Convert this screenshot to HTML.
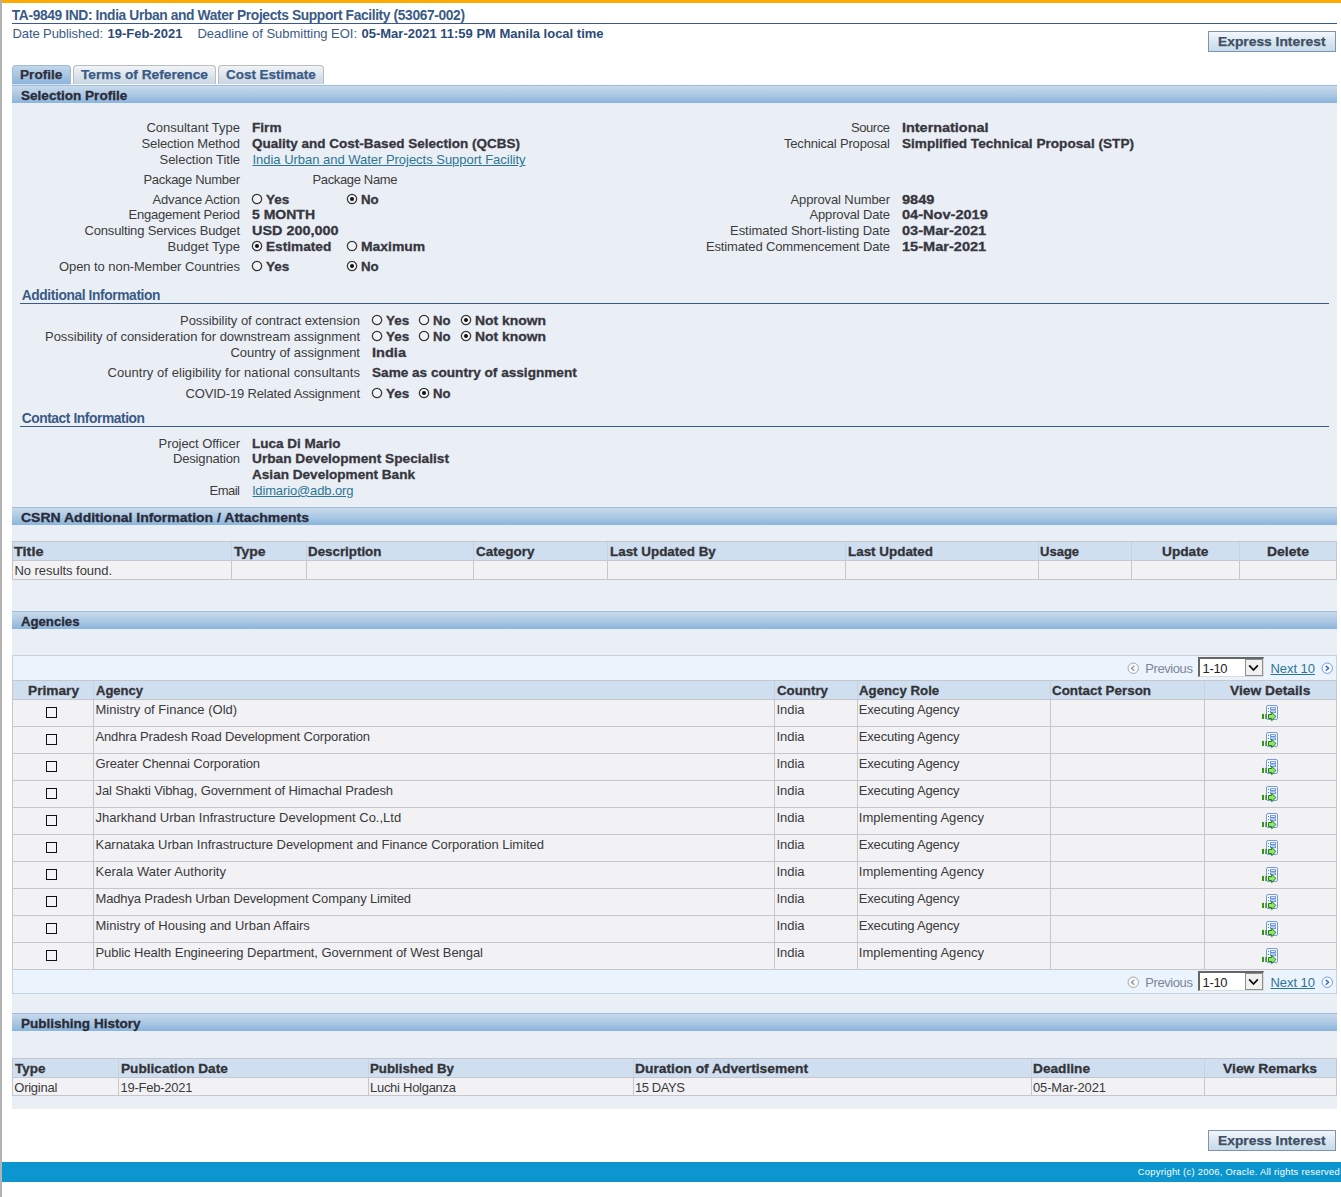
<!DOCTYPE html>
<html><head><meta charset="utf-8"><title>CSRN</title><style>
html,body{margin:0;padding:0;}
body{width:1341px;height:1197px;position:relative;overflow:hidden;background:#fff;font-family:"Liberation Sans",sans-serif;}
div,span.t,svg{position:absolute;}
span.t{white-space:pre;line-height:1em;}
</style></head><body>
<div style="left:0px;top:0px;width:2px;height:1197px;background:#b2b2b2;"></div>
<div style="left:2px;top:0px;width:1339px;height:3px;background:#ffaa00;"></div>
<div style="left:12px;top:23px;width:1325px;height:1px;background:#3a5a87;"></div>
<div style="left:1208px;top:31px;width:126px;height:19px;border:1px solid #8092ad;background:linear-gradient(#f2f7fb,#dde9f2 45%,#c6dbe9);"></div>
<div style="left:1208px;top:1130px;width:126px;height:19px;border:1px solid #8092ad;background:linear-gradient(#f2f7fb,#dde9f2 45%,#c6dbe9);"></div>
<div style="left:12px;top:65px;width:57px;height:18px;border:1px solid #9dbbd9;border-bottom:none;border-radius:4px 4px 0 0;background:linear-gradient(#c3d7eb,#8db4da);"></div>
<div style="left:73px;top:65px;width:141px;height:18px;border:1px solid #b9bcc0;border-bottom:none;border-radius:4px 4px 0 0;background:linear-gradient(#f1f4f7,#c9d6e2);"></div>
<div style="left:218px;top:65px;width:104px;height:18px;border:1px solid #b9bcc0;border-bottom:none;border-radius:4px 4px 0 0;background:linear-gradient(#f1f4f7,#c9d6e2);"></div>
<div style="left:12px;top:84px;width:1325px;height:1px;background:#f6f9fc;"></div>
<div style="left:12px;top:84px;width:59px;height:1px;background:#d3e2f1;"></div>
<div style="left:12px;top:103px;width:1325px;height:1006px;background:#eaeff5;"></div>
<div style="left:12px;top:85px;width:1325px;height:18px;background:linear-gradient(#9fbcda 0,#9fbcda 1px,#c8daec 1px,#abc8e3 55%,#8ab5db);"></div>
<div style="left:12px;top:507px;width:1325px;height:18px;background:linear-gradient(#9fbcda 0,#9fbcda 1px,#c8daec 1px,#abc8e3 55%,#8ab5db);"></div>
<div style="left:12px;top:611px;width:1325px;height:18px;background:linear-gradient(#9fbcda 0,#9fbcda 1px,#c8daec 1px,#abc8e3 55%,#8ab5db);"></div>
<div style="left:12px;top:1013px;width:1325px;height:18px;background:linear-gradient(#9fbcda 0,#9fbcda 1px,#c8daec 1px,#abc8e3 55%,#8ab5db);"></div>
<div style="left:252px;top:194px;width:8px;height:8px;border:1px solid #2a2a2a;border-radius:50%;background:#f2f3f7;box-shadow:0 0 0 0.3px #555;"></div>
<div style="left:347px;top:194px;width:8px;height:8px;border:1px solid #2a2a2a;border-radius:50%;background:#f2f3f7;box-shadow:0 0 0 0.3px #555;"></div>
<div style="left:350px;top:197px;width:4px;height:4px;border-radius:50%;background:#111;"></div>
<div style="left:252px;top:241px;width:8px;height:8px;border:1px solid #2a2a2a;border-radius:50%;background:#f2f3f7;box-shadow:0 0 0 0.3px #555;"></div>
<div style="left:255px;top:244px;width:4px;height:4px;border-radius:50%;background:#111;"></div>
<div style="left:347px;top:241px;width:8px;height:8px;border:1px solid #2a2a2a;border-radius:50%;background:#f2f3f7;box-shadow:0 0 0 0.3px #555;"></div>
<div style="left:252px;top:261px;width:8px;height:8px;border:1px solid #2a2a2a;border-radius:50%;background:#f2f3f7;box-shadow:0 0 0 0.3px #555;"></div>
<div style="left:347px;top:261px;width:8px;height:8px;border:1px solid #2a2a2a;border-radius:50%;background:#f2f3f7;box-shadow:0 0 0 0.3px #555;"></div>
<div style="left:350px;top:264px;width:4px;height:4px;border-radius:50%;background:#111;"></div>
<div style="left:20px;top:303px;width:1309px;height:1px;background:#3a5a87;"></div>
<div style="left:372px;top:315px;width:8px;height:8px;border:1px solid #2a2a2a;border-radius:50%;background:#f2f3f7;box-shadow:0 0 0 0.3px #555;"></div>
<div style="left:419px;top:315px;width:8px;height:8px;border:1px solid #2a2a2a;border-radius:50%;background:#f2f3f7;box-shadow:0 0 0 0.3px #555;"></div>
<div style="left:461px;top:315px;width:8px;height:8px;border:1px solid #2a2a2a;border-radius:50%;background:#f2f3f7;box-shadow:0 0 0 0.3px #555;"></div>
<div style="left:464px;top:318px;width:4px;height:4px;border-radius:50%;background:#111;"></div>
<div style="left:372px;top:331px;width:8px;height:8px;border:1px solid #2a2a2a;border-radius:50%;background:#f2f3f7;box-shadow:0 0 0 0.3px #555;"></div>
<div style="left:419px;top:331px;width:8px;height:8px;border:1px solid #2a2a2a;border-radius:50%;background:#f2f3f7;box-shadow:0 0 0 0.3px #555;"></div>
<div style="left:461px;top:331px;width:8px;height:8px;border:1px solid #2a2a2a;border-radius:50%;background:#f2f3f7;box-shadow:0 0 0 0.3px #555;"></div>
<div style="left:464px;top:334px;width:4px;height:4px;border-radius:50%;background:#111;"></div>
<div style="left:372px;top:388px;width:8px;height:8px;border:1px solid #2a2a2a;border-radius:50%;background:#f2f3f7;box-shadow:0 0 0 0.3px #555;"></div>
<div style="left:419px;top:388px;width:8px;height:8px;border:1px solid #2a2a2a;border-radius:50%;background:#f2f3f7;box-shadow:0 0 0 0.3px #555;"></div>
<div style="left:422px;top:391px;width:4px;height:4px;border-radius:50%;background:#111;"></div>
<div style="left:20px;top:426px;width:1309px;height:1px;background:#3a5a87;"></div>
<div style="left:12px;top:541px;width:1325px;height:1px;background:#c6c7ce;"></div>
<div style="left:12px;top:542px;width:1325px;height:18px;background:#cfdff0;"></div>
<div style="left:12px;top:560px;width:1325px;height:1px;background:#c6c7ce;"></div>
<div style="left:12px;top:561px;width:1325px;height:18px;background:#f2f2f5;"></div>
<div style="left:12px;top:579px;width:1325px;height:1px;background:#c6c7ce;"></div>
<div style="left:12px;top:542px;width:1px;height:18px;background:#c3d3e4;"></div>
<div style="left:12px;top:561px;width:1px;height:19px;background:#c6c7ce;"></div>
<div style="left:231px;top:542px;width:1px;height:18px;background:#c3d3e4;"></div>
<div style="left:231px;top:561px;width:1px;height:19px;background:#c6c7ce;"></div>
<div style="left:306px;top:542px;width:1px;height:18px;background:#c3d3e4;"></div>
<div style="left:306px;top:561px;width:1px;height:19px;background:#c6c7ce;"></div>
<div style="left:473px;top:542px;width:1px;height:18px;background:#c3d3e4;"></div>
<div style="left:473px;top:561px;width:1px;height:19px;background:#c6c7ce;"></div>
<div style="left:607px;top:542px;width:1px;height:18px;background:#c3d3e4;"></div>
<div style="left:607px;top:561px;width:1px;height:19px;background:#c6c7ce;"></div>
<div style="left:845px;top:542px;width:1px;height:18px;background:#c3d3e4;"></div>
<div style="left:845px;top:561px;width:1px;height:19px;background:#c6c7ce;"></div>
<div style="left:1038px;top:542px;width:1px;height:18px;background:#c3d3e4;"></div>
<div style="left:1038px;top:561px;width:1px;height:19px;background:#c6c7ce;"></div>
<div style="left:1131px;top:542px;width:1px;height:18px;background:#c3d3e4;"></div>
<div style="left:1131px;top:561px;width:1px;height:19px;background:#c6c7ce;"></div>
<div style="left:1239px;top:542px;width:1px;height:18px;background:#c3d3e4;"></div>
<div style="left:1239px;top:561px;width:1px;height:19px;background:#c6c7ce;"></div>
<div style="left:1336px;top:542px;width:1px;height:18px;background:#c3d3e4;"></div>
<div style="left:1336px;top:561px;width:1px;height:19px;background:#c6c7ce;"></div>
<div style="left:12px;top:541px;width:1px;height:39px;background:#c6c7ce;"></div>
<div style="left:1336px;top:541px;width:1px;height:39px;background:#c6c7ce;"></div>
<div style="left:12px;top:655px;width:1323px;height:24px;border:1px solid #c8d2dd;background:#ebf3fd;"></div>
<svg style="left:1127px;top:661.6px" width="13" height="13" viewBox="0 0 13 13"><circle cx="6.25" cy="6.25" r="5.2" fill="#f8fafc" stroke="#a6a6a6" stroke-width="1"/><path d="M7.4 3.9 L4.5 6.3 L7.4 8.7" fill="none" stroke="#8c8c8c" stroke-width="1.2"/></svg>
<div style="left:1198px;top:657px;width:62.5px;height:17px;border:1px solid #dcdcdc;border-top:2px solid #666;border-left:2px solid #666;background:#fff;"></div>
<div style="left:1244.5px;top:659px;width:18px;height:17px;border:1px solid #8e8e8e;background:#f1f1f1;box-sizing:border-box;"></div>
<svg style="left:1245px;top:659.5px" width="17" height="16" viewBox="0 0 17 16"><path d="M4.2 5.4 L8.5 10 L12.8 5.4" fill="none" stroke="#111" stroke-width="1.8"/></svg>
<svg style="left:1320.8px;top:661.6px" width="13" height="13" viewBox="0 0 13 13"><circle cx="6.25" cy="6.25" r="5.2" fill="#fbfdff" stroke="#6f9ae6" stroke-width="1"/><path d="M4.7 3.9 L7.6 6.3 L4.7 8.7" fill="none" stroke="#2f6bd0" stroke-width="1.4"/></svg>
<div style="left:12px;top:969px;width:1323px;height:23px;border:1px solid #c8d2dd;background:#ebf3fd;"></div>
<svg style="left:1127px;top:975.6px" width="13" height="13" viewBox="0 0 13 13"><circle cx="6.25" cy="6.25" r="5.2" fill="#f8fafc" stroke="#a6a6a6" stroke-width="1"/><path d="M7.4 3.9 L4.5 6.3 L7.4 8.7" fill="none" stroke="#8c8c8c" stroke-width="1.2"/></svg>
<div style="left:1198px;top:971px;width:62.5px;height:17px;border:1px solid #dcdcdc;border-top:2px solid #666;border-left:2px solid #666;background:#fff;"></div>
<div style="left:1244.5px;top:973px;width:18px;height:17px;border:1px solid #8e8e8e;background:#f1f1f1;box-sizing:border-box;"></div>
<svg style="left:1245px;top:973.5px" width="17" height="16" viewBox="0 0 17 16"><path d="M4.2 5.4 L8.5 10 L12.8 5.4" fill="none" stroke="#111" stroke-width="1.8"/></svg>
<svg style="left:1320.8px;top:975.6px" width="13" height="13" viewBox="0 0 13 13"><circle cx="6.25" cy="6.25" r="5.2" fill="#fbfdff" stroke="#6f9ae6" stroke-width="1"/><path d="M4.7 3.9 L7.6 6.3 L4.7 8.7" fill="none" stroke="#2f6bd0" stroke-width="1.4"/></svg>
<div style="left:12px;top:680px;width:1325px;height:1px;background:#c6c7ce;"></div>
<div style="left:12px;top:681px;width:1325px;height:18px;background:#cfdff0;"></div>
<div style="left:12px;top:699px;width:1325px;height:1px;background:#c6c7ce;"></div>
<div style="left:12px;top:700px;width:1325px;height:26px;background:#f2f2f5;"></div>
<div style="left:12px;top:726px;width:1325px;height:1px;background:#c6c7ce;"></div>
<div style="left:12px;top:727px;width:1325px;height:26px;background:#f2f2f5;"></div>
<div style="left:12px;top:753px;width:1325px;height:1px;background:#c6c7ce;"></div>
<div style="left:12px;top:754px;width:1325px;height:26px;background:#f2f2f5;"></div>
<div style="left:12px;top:780px;width:1325px;height:1px;background:#c6c7ce;"></div>
<div style="left:12px;top:781px;width:1325px;height:26px;background:#f2f2f5;"></div>
<div style="left:12px;top:807px;width:1325px;height:1px;background:#c6c7ce;"></div>
<div style="left:12px;top:808px;width:1325px;height:26px;background:#f2f2f5;"></div>
<div style="left:12px;top:834px;width:1325px;height:1px;background:#c6c7ce;"></div>
<div style="left:12px;top:835px;width:1325px;height:26px;background:#f2f2f5;"></div>
<div style="left:12px;top:861px;width:1325px;height:1px;background:#c6c7ce;"></div>
<div style="left:12px;top:862px;width:1325px;height:26px;background:#f2f2f5;"></div>
<div style="left:12px;top:888px;width:1325px;height:1px;background:#c6c7ce;"></div>
<div style="left:12px;top:889px;width:1325px;height:26px;background:#f2f2f5;"></div>
<div style="left:12px;top:915px;width:1325px;height:1px;background:#c6c7ce;"></div>
<div style="left:12px;top:916px;width:1325px;height:26px;background:#f2f2f5;"></div>
<div style="left:12px;top:942px;width:1325px;height:1px;background:#c6c7ce;"></div>
<div style="left:12px;top:943px;width:1325px;height:26px;background:#f2f2f5;"></div>
<div style="left:12px;top:969px;width:1325px;height:1px;background:#c6c7ce;"></div>
<div style="left:12px;top:681px;width:1px;height:18px;background:#c3d3e4;"></div>
<div style="left:12px;top:700px;width:1px;height:270px;background:#c6c7ce;"></div>
<div style="left:93px;top:681px;width:1px;height:18px;background:#c3d3e4;"></div>
<div style="left:93px;top:700px;width:1px;height:270px;background:#c6c7ce;"></div>
<div style="left:774px;top:681px;width:1px;height:18px;background:#c3d3e4;"></div>
<div style="left:774px;top:700px;width:1px;height:270px;background:#c6c7ce;"></div>
<div style="left:857px;top:681px;width:1px;height:18px;background:#c3d3e4;"></div>
<div style="left:857px;top:700px;width:1px;height:270px;background:#c6c7ce;"></div>
<div style="left:1050px;top:681px;width:1px;height:18px;background:#c3d3e4;"></div>
<div style="left:1050px;top:700px;width:1px;height:270px;background:#c6c7ce;"></div>
<div style="left:1204px;top:681px;width:1px;height:18px;background:#c3d3e4;"></div>
<div style="left:1204px;top:700px;width:1px;height:270px;background:#c6c7ce;"></div>
<div style="left:1336px;top:681px;width:1px;height:18px;background:#c3d3e4;"></div>
<div style="left:1336px;top:700px;width:1px;height:270px;background:#c6c7ce;"></div>
<div style="left:12px;top:680px;width:1px;height:290px;background:#c6c7ce;"></div>
<div style="left:1336px;top:680px;width:1px;height:290px;background:#c6c7ce;"></div>
<div style="left:46px;top:707px;width:9px;height:9px;border:1px solid #111;background:#f4f4f6;"></div>
<svg style="left:1261px;top:704px" width="18" height="18" viewBox="0 0 18 18">
<rect x="5.5" y="1.5" width="11" height="14" rx="1.5" fill="#f4fcff" stroke="#6a8fd8" stroke-width="0.9"/>
<rect x="7" y="4" width="1" height="1" fill="#4d6fbe"/><rect x="7" y="7" width="1" height="1" fill="#4d6fbe"/>
<rect x="9.5" y="3.7" width="5" height="1.8" fill="#fff" stroke="#5d88da" stroke-width="0.9"/>
<rect x="9.5" y="6.9" width="5" height="1.8" fill="#fff" stroke="#5d88da" stroke-width="0.9"/>
<rect x="1" y="9.9" width="2" height="5.1" fill="#36961a"/><rect x="4.3" y="9.9" width="1.5" height="5.1" fill="#3a8a22"/>
<path d="M7.5 10.5 H10.7 V8.3 L14.9 12.5 L10.7 16.7 V14.5 H7.5 Z" fill="#8fe570" stroke="#237d0c" stroke-width="1"/>
</svg>
<div style="left:46px;top:734px;width:9px;height:9px;border:1px solid #111;background:#f4f4f6;"></div>
<svg style="left:1261px;top:731px" width="18" height="18" viewBox="0 0 18 18">
<rect x="5.5" y="1.5" width="11" height="14" rx="1.5" fill="#f4fcff" stroke="#6a8fd8" stroke-width="0.9"/>
<rect x="7" y="4" width="1" height="1" fill="#4d6fbe"/><rect x="7" y="7" width="1" height="1" fill="#4d6fbe"/>
<rect x="9.5" y="3.7" width="5" height="1.8" fill="#fff" stroke="#5d88da" stroke-width="0.9"/>
<rect x="9.5" y="6.9" width="5" height="1.8" fill="#fff" stroke="#5d88da" stroke-width="0.9"/>
<rect x="1" y="9.9" width="2" height="5.1" fill="#36961a"/><rect x="4.3" y="9.9" width="1.5" height="5.1" fill="#3a8a22"/>
<path d="M7.5 10.5 H10.7 V8.3 L14.9 12.5 L10.7 16.7 V14.5 H7.5 Z" fill="#8fe570" stroke="#237d0c" stroke-width="1"/>
</svg>
<div style="left:46px;top:761px;width:9px;height:9px;border:1px solid #111;background:#f4f4f6;"></div>
<svg style="left:1261px;top:758px" width="18" height="18" viewBox="0 0 18 18">
<rect x="5.5" y="1.5" width="11" height="14" rx="1.5" fill="#f4fcff" stroke="#6a8fd8" stroke-width="0.9"/>
<rect x="7" y="4" width="1" height="1" fill="#4d6fbe"/><rect x="7" y="7" width="1" height="1" fill="#4d6fbe"/>
<rect x="9.5" y="3.7" width="5" height="1.8" fill="#fff" stroke="#5d88da" stroke-width="0.9"/>
<rect x="9.5" y="6.9" width="5" height="1.8" fill="#fff" stroke="#5d88da" stroke-width="0.9"/>
<rect x="1" y="9.9" width="2" height="5.1" fill="#36961a"/><rect x="4.3" y="9.9" width="1.5" height="5.1" fill="#3a8a22"/>
<path d="M7.5 10.5 H10.7 V8.3 L14.9 12.5 L10.7 16.7 V14.5 H7.5 Z" fill="#8fe570" stroke="#237d0c" stroke-width="1"/>
</svg>
<div style="left:46px;top:788px;width:9px;height:9px;border:1px solid #111;background:#f4f4f6;"></div>
<svg style="left:1261px;top:785px" width="18" height="18" viewBox="0 0 18 18">
<rect x="5.5" y="1.5" width="11" height="14" rx="1.5" fill="#f4fcff" stroke="#6a8fd8" stroke-width="0.9"/>
<rect x="7" y="4" width="1" height="1" fill="#4d6fbe"/><rect x="7" y="7" width="1" height="1" fill="#4d6fbe"/>
<rect x="9.5" y="3.7" width="5" height="1.8" fill="#fff" stroke="#5d88da" stroke-width="0.9"/>
<rect x="9.5" y="6.9" width="5" height="1.8" fill="#fff" stroke="#5d88da" stroke-width="0.9"/>
<rect x="1" y="9.9" width="2" height="5.1" fill="#36961a"/><rect x="4.3" y="9.9" width="1.5" height="5.1" fill="#3a8a22"/>
<path d="M7.5 10.5 H10.7 V8.3 L14.9 12.5 L10.7 16.7 V14.5 H7.5 Z" fill="#8fe570" stroke="#237d0c" stroke-width="1"/>
</svg>
<div style="left:46px;top:815px;width:9px;height:9px;border:1px solid #111;background:#f4f4f6;"></div>
<svg style="left:1261px;top:812px" width="18" height="18" viewBox="0 0 18 18">
<rect x="5.5" y="1.5" width="11" height="14" rx="1.5" fill="#f4fcff" stroke="#6a8fd8" stroke-width="0.9"/>
<rect x="7" y="4" width="1" height="1" fill="#4d6fbe"/><rect x="7" y="7" width="1" height="1" fill="#4d6fbe"/>
<rect x="9.5" y="3.7" width="5" height="1.8" fill="#fff" stroke="#5d88da" stroke-width="0.9"/>
<rect x="9.5" y="6.9" width="5" height="1.8" fill="#fff" stroke="#5d88da" stroke-width="0.9"/>
<rect x="1" y="9.9" width="2" height="5.1" fill="#36961a"/><rect x="4.3" y="9.9" width="1.5" height="5.1" fill="#3a8a22"/>
<path d="M7.5 10.5 H10.7 V8.3 L14.9 12.5 L10.7 16.7 V14.5 H7.5 Z" fill="#8fe570" stroke="#237d0c" stroke-width="1"/>
</svg>
<div style="left:46px;top:842px;width:9px;height:9px;border:1px solid #111;background:#f4f4f6;"></div>
<svg style="left:1261px;top:839px" width="18" height="18" viewBox="0 0 18 18">
<rect x="5.5" y="1.5" width="11" height="14" rx="1.5" fill="#f4fcff" stroke="#6a8fd8" stroke-width="0.9"/>
<rect x="7" y="4" width="1" height="1" fill="#4d6fbe"/><rect x="7" y="7" width="1" height="1" fill="#4d6fbe"/>
<rect x="9.5" y="3.7" width="5" height="1.8" fill="#fff" stroke="#5d88da" stroke-width="0.9"/>
<rect x="9.5" y="6.9" width="5" height="1.8" fill="#fff" stroke="#5d88da" stroke-width="0.9"/>
<rect x="1" y="9.9" width="2" height="5.1" fill="#36961a"/><rect x="4.3" y="9.9" width="1.5" height="5.1" fill="#3a8a22"/>
<path d="M7.5 10.5 H10.7 V8.3 L14.9 12.5 L10.7 16.7 V14.5 H7.5 Z" fill="#8fe570" stroke="#237d0c" stroke-width="1"/>
</svg>
<div style="left:46px;top:869px;width:9px;height:9px;border:1px solid #111;background:#f4f4f6;"></div>
<svg style="left:1261px;top:866px" width="18" height="18" viewBox="0 0 18 18">
<rect x="5.5" y="1.5" width="11" height="14" rx="1.5" fill="#f4fcff" stroke="#6a8fd8" stroke-width="0.9"/>
<rect x="7" y="4" width="1" height="1" fill="#4d6fbe"/><rect x="7" y="7" width="1" height="1" fill="#4d6fbe"/>
<rect x="9.5" y="3.7" width="5" height="1.8" fill="#fff" stroke="#5d88da" stroke-width="0.9"/>
<rect x="9.5" y="6.9" width="5" height="1.8" fill="#fff" stroke="#5d88da" stroke-width="0.9"/>
<rect x="1" y="9.9" width="2" height="5.1" fill="#36961a"/><rect x="4.3" y="9.9" width="1.5" height="5.1" fill="#3a8a22"/>
<path d="M7.5 10.5 H10.7 V8.3 L14.9 12.5 L10.7 16.7 V14.5 H7.5 Z" fill="#8fe570" stroke="#237d0c" stroke-width="1"/>
</svg>
<div style="left:46px;top:896px;width:9px;height:9px;border:1px solid #111;background:#f4f4f6;"></div>
<svg style="left:1261px;top:893px" width="18" height="18" viewBox="0 0 18 18">
<rect x="5.5" y="1.5" width="11" height="14" rx="1.5" fill="#f4fcff" stroke="#6a8fd8" stroke-width="0.9"/>
<rect x="7" y="4" width="1" height="1" fill="#4d6fbe"/><rect x="7" y="7" width="1" height="1" fill="#4d6fbe"/>
<rect x="9.5" y="3.7" width="5" height="1.8" fill="#fff" stroke="#5d88da" stroke-width="0.9"/>
<rect x="9.5" y="6.9" width="5" height="1.8" fill="#fff" stroke="#5d88da" stroke-width="0.9"/>
<rect x="1" y="9.9" width="2" height="5.1" fill="#36961a"/><rect x="4.3" y="9.9" width="1.5" height="5.1" fill="#3a8a22"/>
<path d="M7.5 10.5 H10.7 V8.3 L14.9 12.5 L10.7 16.7 V14.5 H7.5 Z" fill="#8fe570" stroke="#237d0c" stroke-width="1"/>
</svg>
<div style="left:46px;top:923px;width:9px;height:9px;border:1px solid #111;background:#f4f4f6;"></div>
<svg style="left:1261px;top:920px" width="18" height="18" viewBox="0 0 18 18">
<rect x="5.5" y="1.5" width="11" height="14" rx="1.5" fill="#f4fcff" stroke="#6a8fd8" stroke-width="0.9"/>
<rect x="7" y="4" width="1" height="1" fill="#4d6fbe"/><rect x="7" y="7" width="1" height="1" fill="#4d6fbe"/>
<rect x="9.5" y="3.7" width="5" height="1.8" fill="#fff" stroke="#5d88da" stroke-width="0.9"/>
<rect x="9.5" y="6.9" width="5" height="1.8" fill="#fff" stroke="#5d88da" stroke-width="0.9"/>
<rect x="1" y="9.9" width="2" height="5.1" fill="#36961a"/><rect x="4.3" y="9.9" width="1.5" height="5.1" fill="#3a8a22"/>
<path d="M7.5 10.5 H10.7 V8.3 L14.9 12.5 L10.7 16.7 V14.5 H7.5 Z" fill="#8fe570" stroke="#237d0c" stroke-width="1"/>
</svg>
<div style="left:46px;top:950px;width:9px;height:9px;border:1px solid #111;background:#f4f4f6;"></div>
<svg style="left:1261px;top:947px" width="18" height="18" viewBox="0 0 18 18">
<rect x="5.5" y="1.5" width="11" height="14" rx="1.5" fill="#f4fcff" stroke="#6a8fd8" stroke-width="0.9"/>
<rect x="7" y="4" width="1" height="1" fill="#4d6fbe"/><rect x="7" y="7" width="1" height="1" fill="#4d6fbe"/>
<rect x="9.5" y="3.7" width="5" height="1.8" fill="#fff" stroke="#5d88da" stroke-width="0.9"/>
<rect x="9.5" y="6.9" width="5" height="1.8" fill="#fff" stroke="#5d88da" stroke-width="0.9"/>
<rect x="1" y="9.9" width="2" height="5.1" fill="#36961a"/><rect x="4.3" y="9.9" width="1.5" height="5.1" fill="#3a8a22"/>
<path d="M7.5 10.5 H10.7 V8.3 L14.9 12.5 L10.7 16.7 V14.5 H7.5 Z" fill="#8fe570" stroke="#237d0c" stroke-width="1"/>
</svg>
<div style="left:12px;top:1058px;width:1325px;height:1px;background:#c6c7ce;"></div>
<div style="left:12px;top:1059px;width:1325px;height:18px;background:#cfdff0;"></div>
<div style="left:12px;top:1077px;width:1325px;height:1px;background:#c6c7ce;"></div>
<div style="left:12px;top:1078px;width:1325px;height:17px;background:#f2f2f5;"></div>
<div style="left:12px;top:1095px;width:1325px;height:1px;background:#c6c7ce;"></div>
<div style="left:12px;top:1059px;width:1px;height:18px;background:#c3d3e4;"></div>
<div style="left:12px;top:1078px;width:1px;height:18px;background:#c6c7ce;"></div>
<div style="left:118px;top:1059px;width:1px;height:18px;background:#c3d3e4;"></div>
<div style="left:118px;top:1078px;width:1px;height:18px;background:#c6c7ce;"></div>
<div style="left:368px;top:1059px;width:1px;height:18px;background:#c3d3e4;"></div>
<div style="left:368px;top:1078px;width:1px;height:18px;background:#c6c7ce;"></div>
<div style="left:633px;top:1059px;width:1px;height:18px;background:#c3d3e4;"></div>
<div style="left:633px;top:1078px;width:1px;height:18px;background:#c6c7ce;"></div>
<div style="left:1031px;top:1059px;width:1px;height:18px;background:#c3d3e4;"></div>
<div style="left:1031px;top:1078px;width:1px;height:18px;background:#c6c7ce;"></div>
<div style="left:1204px;top:1059px;width:1px;height:18px;background:#c3d3e4;"></div>
<div style="left:1204px;top:1078px;width:1px;height:18px;background:#c6c7ce;"></div>
<div style="left:1336px;top:1059px;width:1px;height:18px;background:#c3d3e4;"></div>
<div style="left:1336px;top:1078px;width:1px;height:18px;background:#c6c7ce;"></div>
<div style="left:12px;top:1058px;width:1px;height:38px;background:#c6c7ce;"></div>
<div style="left:1336px;top:1058px;width:1px;height:38px;background:#c6c7ce;"></div>
<div style="left:2px;top:1162px;width:1339px;height:20px;background:#0b96d0;"></div>
<span class="t" style="left:11.80px;top:9.00px;font-size:13.8px;color:#3a5a87;font-weight:700;letter-spacing:-0.377px;">TA-9849 IND: India Urban and Water Projects Support Facility (53067-002)</span>
<span class="t" style="left:12.50px;top:27.00px;font-size:13px;color:#3a5a87;letter-spacing:-0.092px;">Date Published:</span>
<span class="t" style="left:107.50px;top:27.00px;font-size:13px;color:#2d4a78;font-weight:700;letter-spacing:-0.016px;">19-Feb-2021</span>
<span class="t" style="left:197.50px;top:27.00px;font-size:13px;color:#3a5a87;letter-spacing:-0.035px;">Deadline of Submitting EOI:</span>
<span class="t" style="left:361.50px;top:27.00px;font-size:13px;color:#2d4a78;font-weight:700;">05-Mar-2021 11:59 PM Manila local time</span>
<span class="t" style="left:1218.25px;top:35.00px;font-size:13px;color:#3f4f66;font-weight:700;transform:scaleX(1.0625);transform-origin:0 0;-webkit-text-stroke:0.25px;">Express Interest</span>
<span class="t" style="left:1218.25px;top:1134.00px;font-size:13px;color:#3f4f66;font-weight:700;transform:scaleX(1.0625);transform-origin:0 0;-webkit-text-stroke:0.25px;">Express Interest</span>
<span class="t" style="left:20.20px;top:68.00px;font-size:13px;color:#2e2e3c;font-weight:700;transform:scaleX(1.0477);transform-origin:0 0;-webkit-text-stroke:0.25px;">Profile</span>
<span class="t" style="left:81.00px;top:68.00px;font-size:13px;color:#3a5a87;font-weight:700;transform:scaleX(1.0546);transform-origin:0 0;-webkit-text-stroke:0.25px;">Terms of Reference</span>
<span class="t" style="left:225.80px;top:68.00px;font-size:13px;color:#3a5a87;font-weight:700;transform:scaleX(1.0346);transform-origin:0 0;-webkit-text-stroke:0.25px;">Cost Estimate</span>
<span class="t" style="left:21.00px;top:89.00px;font-size:13px;color:#2a2a38;font-weight:700;transform:scaleX(1.0434);transform-origin:0 0;-webkit-text-stroke:0.3px;">Selection Profile</span>
<span class="t" style="left:21.00px;top:511.00px;font-size:13px;color:#2a2a38;font-weight:700;transform:scaleX(1.0758);transform-origin:0 0;-webkit-text-stroke:0.3px;">CSRN Additional Information / Attachments</span>
<span class="t" style="left:21.00px;top:615.00px;font-size:13px;color:#2a2a38;font-weight:700;transform:scaleX(1.0119);transform-origin:0 0;-webkit-text-stroke:0.3px;">Agencies</span>
<span class="t" style="left:21.00px;top:1017.00px;font-size:13px;color:#2a2a38;font-weight:700;transform:scaleX(1.0405);transform-origin:0 0;-webkit-text-stroke:0.3px;">Publishing History</span>
<span class="t" style="left:146.50px;top:121.00px;font-size:13px;color:#3c3c3c;letter-spacing:-0.016px;">Consultant Type</span>
<span class="t" style="left:252.00px;top:121.00px;font-size:13px;color:#36363e;font-weight:700;transform:scaleX(1.0471);transform-origin:0 0;-webkit-text-stroke:0.3px;">Firm</span>
<span class="t" style="left:141.50px;top:137.00px;font-size:13px;color:#3c3c3c;letter-spacing:-0.130px;">Selection Method</span>
<span class="t" style="left:252.00px;top:137.00px;font-size:13px;color:#36363e;font-weight:700;transform:scaleX(1.0393);transform-origin:0 0;-webkit-text-stroke:0.3px;">Quality and Cost-Based Selection (QCBS)</span>
<span class="t" style="left:159.50px;top:153.00px;font-size:13px;color:#3c3c3c;letter-spacing:-0.031px;">Selection Title</span>
<span class="t" style="left:252.50px;top:153.00px;font-size:13px;color:#2c7596;letter-spacing:-0.024px;text-decoration:underline;">India Urban and Water Projects Support Facility</span>
<span class="t" style="left:143.50px;top:173.00px;font-size:13px;color:#3c3c3c;letter-spacing:-0.304px;">Package Number</span>
<span class="t" style="left:312.50px;top:173.00px;font-size:13px;color:#3c3c3c;letter-spacing:-0.354px;">Package Name</span>
<span class="t" style="left:152.50px;top:193.00px;font-size:13px;color:#3c3c3c;letter-spacing:-0.163px;">Advance Action</span>
<span class="t" style="left:265.70px;top:193.00px;font-size:13px;color:#36363e;font-weight:700;transform:scaleX(1.0392);transform-origin:0 0;-webkit-text-stroke:0.3px;">Yes</span>
<span class="t" style="left:360.80px;top:193.00px;font-size:13px;color:#36363e;font-weight:700;transform:scaleX(1.0205);transform-origin:0 0;-webkit-text-stroke:0.3px;">No</span>
<span class="t" style="left:128.50px;top:208.00px;font-size:13px;color:#3c3c3c;letter-spacing:-0.214px;">Engagement Period</span>
<span class="t" style="left:252.00px;top:208.00px;font-size:13px;color:#36363e;font-weight:700;transform:scaleX(1.0769);transform-origin:0 0;-webkit-text-stroke:0.3px;">5 MONTH</span>
<span class="t" style="left:84.50px;top:224.00px;font-size:13px;color:#3c3c3c;letter-spacing:-0.168px;">Consulting Services Budget</span>
<span class="t" style="left:252.00px;top:224.00px;font-size:13px;color:#36363e;font-weight:700;transform:scaleX(1.1081);transform-origin:0 0;-webkit-text-stroke:0.3px;">USD 200,000</span>
<span class="t" style="left:167.50px;top:240.00px;font-size:13px;color:#3c3c3c;letter-spacing:-0.027px;">Budget Type</span>
<span class="t" style="left:265.70px;top:240.00px;font-size:13px;color:#36363e;font-weight:700;transform:scaleX(1.0508);transform-origin:0 0;-webkit-text-stroke:0.3px;">Estimated</span>
<span class="t" style="left:360.80px;top:240.00px;font-size:13px;color:#36363e;font-weight:700;transform:scaleX(1.0706);transform-origin:0 0;-webkit-text-stroke:0.3px;">Maximum</span>
<span class="t" style="left:59.00px;top:260.00px;font-size:13px;color:#3c3c3c;letter-spacing:-0.067px;">Open to non-Member Countries</span>
<span class="t" style="left:265.70px;top:260.00px;font-size:13px;color:#36363e;font-weight:700;transform:scaleX(1.0392);transform-origin:0 0;-webkit-text-stroke:0.3px;">Yes</span>
<span class="t" style="left:360.80px;top:260.00px;font-size:13px;color:#36363e;font-weight:700;transform:scaleX(1.0205);transform-origin:0 0;-webkit-text-stroke:0.3px;">No</span>
<span class="t" style="left:851.00px;top:121.00px;font-size:13px;color:#3c3c3c;letter-spacing:-0.441px;">Source</span>
<span class="t" style="left:902.00px;top:121.00px;font-size:13px;color:#36363e;font-weight:700;transform:scaleX(1.1088);transform-origin:0 0;-webkit-text-stroke:0.3px;">International</span>
<span class="t" style="left:784.00px;top:137.00px;font-size:13px;color:#3c3c3c;letter-spacing:-0.184px;">Technical Proposal</span>
<span class="t" style="left:902.00px;top:137.00px;font-size:13px;color:#36363e;font-weight:700;transform:scaleX(1.0473);transform-origin:0 0;-webkit-text-stroke:0.3px;">Simplified Technical Proposal (STP)</span>
<span class="t" style="left:790.50px;top:193.00px;font-size:13px;color:#3c3c3c;letter-spacing:-0.118px;">Approval Number</span>
<span class="t" style="left:902.00px;top:193.00px;font-size:13px;color:#36363e;font-weight:700;transform:scaleX(1.1200);transform-origin:0 0;-webkit-text-stroke:0.3px;">9849</span>
<span class="t" style="left:809.50px;top:208.00px;font-size:13px;color:#3c3c3c;letter-spacing:-0.158px;">Approval Date</span>
<span class="t" style="left:902.00px;top:208.00px;font-size:13px;color:#36363e;font-weight:700;transform:scaleX(1.1200);transform-origin:0 0;-webkit-text-stroke:0.3px;">04-Nov-2019</span>
<span class="t" style="left:730.00px;top:224.00px;font-size:13px;color:#3c3c3c;letter-spacing:-0.042px;">Estimated Short-listing Date</span>
<span class="t" style="left:902.00px;top:224.00px;font-size:13px;color:#36363e;font-weight:700;transform:scaleX(1.1200);transform-origin:0 0;-webkit-text-stroke:0.3px;">03-Mar-2021</span>
<span class="t" style="left:706.00px;top:240.00px;font-size:13px;color:#3c3c3c;letter-spacing:-0.148px;">Estimated Commencement Date</span>
<span class="t" style="left:902.00px;top:240.00px;font-size:13px;color:#36363e;font-weight:700;transform:scaleX(1.1200);transform-origin:0 0;-webkit-text-stroke:0.3px;">15-Mar-2021</span>
<span class="t" style="left:21.70px;top:289.00px;font-size:13.8px;color:#3a5a87;font-weight:700;letter-spacing:-0.398px;">Additional Information</span>
<span class="t" style="left:180.00px;top:314.00px;font-size:13px;color:#3c3c3c;letter-spacing:-0.043px;">Possibility of contract extension</span>
<span class="t" style="left:385.70px;top:314.00px;font-size:13px;color:#36363e;font-weight:700;transform:scaleX(1.0392);transform-origin:0 0;-webkit-text-stroke:0.3px;">Yes</span>
<span class="t" style="left:433.00px;top:314.00px;font-size:13px;color:#36363e;font-weight:700;transform:scaleX(1.0090);transform-origin:0 0;-webkit-text-stroke:0.3px;">No</span>
<span class="t" style="left:475.00px;top:314.00px;font-size:13px;color:#36363e;font-weight:700;transform:scaleX(1.0687);transform-origin:0 0;-webkit-text-stroke:0.3px;">Not known</span>
<span class="t" style="left:45.00px;top:330.00px;font-size:13px;color:#3c3c3c;letter-spacing:-0.028px;">Possibility of consideration for downstream assignment</span>
<span class="t" style="left:385.70px;top:330.00px;font-size:13px;color:#36363e;font-weight:700;transform:scaleX(1.0392);transform-origin:0 0;-webkit-text-stroke:0.3px;">Yes</span>
<span class="t" style="left:433.00px;top:330.00px;font-size:13px;color:#36363e;font-weight:700;transform:scaleX(1.0090);transform-origin:0 0;-webkit-text-stroke:0.3px;">No</span>
<span class="t" style="left:475.00px;top:330.00px;font-size:13px;color:#36363e;font-weight:700;transform:scaleX(1.0687);transform-origin:0 0;-webkit-text-stroke:0.3px;">Not known</span>
<span class="t" style="left:230.50px;top:346.00px;font-size:13px;color:#3c3c3c;letter-spacing:-0.029px;">Country of assignment</span>
<span class="t" style="left:371.80px;top:346.00px;font-size:13px;color:#36363e;font-weight:700;transform:scaleX(1.1200);transform-origin:0 0;-webkit-text-stroke:0.3px;">India</span>
<span class="t" style="left:107.50px;top:366.00px;font-size:13px;color:#3c3c3c;letter-spacing:0.054px;">Country of eligibility for national consultants</span>
<span class="t" style="left:371.80px;top:366.00px;font-size:13px;color:#36363e;font-weight:700;transform:scaleX(1.0456);transform-origin:0 0;-webkit-text-stroke:0.3px;">Same as country of assignment</span>
<span class="t" style="left:185.50px;top:387.00px;font-size:13px;color:#3c3c3c;letter-spacing:-0.181px;">COVID-19 Related Assignment</span>
<span class="t" style="left:385.70px;top:387.00px;font-size:13px;color:#36363e;font-weight:700;transform:scaleX(1.0392);transform-origin:0 0;-webkit-text-stroke:0.3px;">Yes</span>
<span class="t" style="left:433.00px;top:387.00px;font-size:13px;color:#36363e;font-weight:700;transform:scaleX(1.0090);transform-origin:0 0;-webkit-text-stroke:0.3px;">No</span>
<span class="t" style="left:21.70px;top:412.00px;font-size:13.8px;color:#3a5a87;font-weight:700;letter-spacing:-0.432px;">Contact Information</span>
<span class="t" style="left:158.50px;top:437.00px;font-size:13px;color:#3c3c3c;letter-spacing:-0.045px;">Project Officer</span>
<span class="t" style="left:252.00px;top:437.00px;font-size:13px;color:#36363e;font-weight:700;transform:scaleX(1.0381);transform-origin:0 0;-webkit-text-stroke:0.3px;">Luca Di Mario</span>
<span class="t" style="left:173.00px;top:452.00px;font-size:13px;color:#3c3c3c;letter-spacing:-0.166px;">Designation</span>
<span class="t" style="left:252.00px;top:452.00px;font-size:13px;color:#36363e;font-weight:700;transform:scaleX(1.0528);transform-origin:0 0;-webkit-text-stroke:0.3px;">Urban Development Specialist</span>
<span class="t" style="left:252.00px;top:468.00px;font-size:13px;color:#36363e;font-weight:700;transform:scaleX(1.0446);transform-origin:0 0;-webkit-text-stroke:0.3px;">Asian Development Bank</span>
<span class="t" style="left:209.50px;top:484.00px;font-size:13px;color:#3c3c3c;letter-spacing:-0.504px;">Email</span>
<span class="t" style="left:252.50px;top:484.00px;font-size:13px;color:#2c7596;letter-spacing:-0.121px;text-decoration:underline;">ldimario@adb.org</span>
<span class="t" style="left:14.00px;top:545.00px;font-size:13px;color:#333338;font-weight:700;transform:scaleX(1.1132);transform-origin:0 0;-webkit-text-stroke:0.3px;">Title</span>
<span class="t" style="left:233.50px;top:545.00px;font-size:13px;color:#333338;font-weight:700;transform:scaleX(1.0718);transform-origin:0 0;-webkit-text-stroke:0.3px;">Type</span>
<span class="t" style="left:308.30px;top:545.00px;font-size:13px;color:#333338;font-weight:700;transform:scaleX(1.0263);transform-origin:0 0;-webkit-text-stroke:0.3px;">Description</span>
<span class="t" style="left:475.50px;top:545.00px;font-size:13px;color:#333338;font-weight:700;transform:scaleX(1.0380);transform-origin:0 0;-webkit-text-stroke:0.3px;">Category</span>
<span class="t" style="left:609.80px;top:545.00px;font-size:13px;color:#333338;font-weight:700;transform:scaleX(1.0314);transform-origin:0 0;-webkit-text-stroke:0.3px;">Last Updated By</span>
<span class="t" style="left:847.50px;top:545.00px;font-size:13px;color:#333338;font-weight:700;transform:scaleX(1.0323);transform-origin:0 0;-webkit-text-stroke:0.3px;">Last Updated</span>
<span class="t" style="left:1040.30px;top:545.00px;font-size:13px;color:#333338;font-weight:700;transform:scaleX(1.0018);transform-origin:0 0;-webkit-text-stroke:0.3px;">Usage</span>
<span class="t" style="left:1162.20px;top:545.00px;font-size:13px;color:#333338;font-weight:700;transform:scaleX(1.0530);transform-origin:0 0;-webkit-text-stroke:0.3px;">Update</span>
<span class="t" style="left:1267.20px;top:545.00px;font-size:13px;color:#333338;font-weight:700;transform:scaleX(1.0735);transform-origin:0 0;-webkit-text-stroke:0.3px;">Delete</span>
<span class="t" style="left:14.50px;top:564.00px;font-size:13px;color:#3a3a3a;letter-spacing:-0.049px;">No results found.</span>
<span class="t" style="left:1145.30px;top:662.00px;font-size:13px;color:#7d8796;letter-spacing:-0.425px;">Previous</span>
<span class="t" style="left:1202.60px;top:662.00px;font-size:13px;color:#222;letter-spacing:-0.344px;">1-10</span>
<span class="t" style="left:1270.50px;top:662.00px;font-size:13px;color:#2c7596;letter-spacing:-0.052px;text-decoration:underline;">Next 10</span>
<span class="t" style="left:1145.30px;top:976.00px;font-size:13px;color:#7d8796;letter-spacing:-0.425px;">Previous</span>
<span class="t" style="left:1202.60px;top:976.00px;font-size:13px;color:#222;letter-spacing:-0.344px;">1-10</span>
<span class="t" style="left:1270.50px;top:976.00px;font-size:13px;color:#2c7596;letter-spacing:-0.052px;text-decoration:underline;">Next 10</span>
<span class="t" style="left:27.50px;top:684.00px;font-size:13px;color:#333338;font-weight:700;transform:scaleX(1.0532);transform-origin:0 0;-webkit-text-stroke:0.3px;">Primary</span>
<span class="t" style="left:95.50px;top:684.00px;font-size:13px;color:#333338;font-weight:700;transform:scaleX(1.0007);transform-origin:0 0;-webkit-text-stroke:0.3px;">Agency</span>
<span class="t" style="left:776.50px;top:684.00px;font-size:13px;color:#333338;font-weight:700;transform:scaleX(1.0232);transform-origin:0 0;-webkit-text-stroke:0.3px;">Country</span>
<span class="t" style="left:858.80px;top:684.00px;font-size:13px;color:#333338;font-weight:700;transform:scaleX(1.0184);transform-origin:0 0;-webkit-text-stroke:0.3px;">Agency Role</span>
<span class="t" style="left:1052.00px;top:684.00px;font-size:13px;color:#333338;font-weight:700;transform:scaleX(1.0304);transform-origin:0 0;-webkit-text-stroke:0.3px;">Contact Person</span>
<span class="t" style="left:1230.10px;top:684.00px;font-size:13px;color:#333338;font-weight:700;transform:scaleX(1.0629);transform-origin:0 0;-webkit-text-stroke:0.3px;">View Details</span>
<span class="t" style="left:95.50px;top:703.00px;font-size:13px;color:#3a3a3a;">Ministry of Finance (Old)</span>
<span class="t" style="left:776.50px;top:703.00px;font-size:13px;color:#3a3a3a;letter-spacing:-0.051px;">India</span>
<span class="t" style="left:858.80px;top:703.00px;font-size:13px;color:#3a3a3a;letter-spacing:-0.177px;">Executing Agency</span>
<span class="t" style="left:95.50px;top:730.00px;font-size:13px;color:#3a3a3a;letter-spacing:-0.140px;">Andhra Pradesh Road Development Corporation</span>
<span class="t" style="left:776.50px;top:730.00px;font-size:13px;color:#3a3a3a;letter-spacing:-0.051px;">India</span>
<span class="t" style="left:858.80px;top:730.00px;font-size:13px;color:#3a3a3a;letter-spacing:-0.177px;">Executing Agency</span>
<span class="t" style="left:95.50px;top:757.00px;font-size:13px;color:#3a3a3a;letter-spacing:-0.121px;">Greater Chennai Corporation</span>
<span class="t" style="left:776.50px;top:757.00px;font-size:13px;color:#3a3a3a;letter-spacing:-0.051px;">India</span>
<span class="t" style="left:858.80px;top:757.00px;font-size:13px;color:#3a3a3a;letter-spacing:-0.177px;">Executing Agency</span>
<span class="t" style="left:95.50px;top:784.00px;font-size:13px;color:#3a3a3a;letter-spacing:-0.120px;">Jal Shakti Vibhag, Government of Himachal Pradesh</span>
<span class="t" style="left:776.50px;top:784.00px;font-size:13px;color:#3a3a3a;letter-spacing:-0.051px;">India</span>
<span class="t" style="left:858.80px;top:784.00px;font-size:13px;color:#3a3a3a;letter-spacing:-0.177px;">Executing Agency</span>
<span class="t" style="left:95.50px;top:811.00px;font-size:13px;color:#3a3a3a;">Jharkhand Urban Infrastructure Development Co.,Ltd</span>
<span class="t" style="left:776.50px;top:811.00px;font-size:13px;color:#3a3a3a;letter-spacing:-0.051px;">India</span>
<span class="t" style="left:858.80px;top:811.00px;font-size:13px;color:#3a3a3a;letter-spacing:0.050px;">Implementing Agency</span>
<span class="t" style="left:95.50px;top:838.00px;font-size:13px;color:#3a3a3a;letter-spacing:-0.033px;">Karnataka Urban Infrastructure Development and Finance Corporation Limited</span>
<span class="t" style="left:776.50px;top:838.00px;font-size:13px;color:#3a3a3a;letter-spacing:-0.051px;">India</span>
<span class="t" style="left:858.80px;top:838.00px;font-size:13px;color:#3a3a3a;letter-spacing:-0.177px;">Executing Agency</span>
<span class="t" style="left:95.50px;top:865.00px;font-size:13px;color:#3a3a3a;letter-spacing:0.044px;">Kerala Water Authority</span>
<span class="t" style="left:776.50px;top:865.00px;font-size:13px;color:#3a3a3a;letter-spacing:-0.051px;">India</span>
<span class="t" style="left:858.80px;top:865.00px;font-size:13px;color:#3a3a3a;letter-spacing:0.050px;">Implementing Agency</span>
<span class="t" style="left:95.50px;top:892.00px;font-size:13px;color:#3a3a3a;letter-spacing:-0.144px;">Madhya Pradesh Urban Development Company Limited</span>
<span class="t" style="left:776.50px;top:892.00px;font-size:13px;color:#3a3a3a;letter-spacing:-0.051px;">India</span>
<span class="t" style="left:858.80px;top:892.00px;font-size:13px;color:#3a3a3a;letter-spacing:-0.177px;">Executing Agency</span>
<span class="t" style="left:95.50px;top:919.00px;font-size:13px;color:#3a3a3a;">Ministry of Housing and Urban Affairs</span>
<span class="t" style="left:776.50px;top:919.00px;font-size:13px;color:#3a3a3a;letter-spacing:-0.051px;">India</span>
<span class="t" style="left:858.80px;top:919.00px;font-size:13px;color:#3a3a3a;letter-spacing:-0.177px;">Executing Agency</span>
<span class="t" style="left:95.50px;top:946.00px;font-size:13px;color:#3a3a3a;letter-spacing:-0.063px;">Public Health Engineering Department, Government of West Bengal</span>
<span class="t" style="left:776.50px;top:946.00px;font-size:13px;color:#3a3a3a;letter-spacing:-0.051px;">India</span>
<span class="t" style="left:858.80px;top:946.00px;font-size:13px;color:#3a3a3a;letter-spacing:0.050px;">Implementing Agency</span>
<span class="t" style="left:14.90px;top:1062.00px;font-size:13px;color:#333338;font-weight:700;transform:scaleX(1.0343);transform-origin:0 0;-webkit-text-stroke:0.3px;">Type</span>
<span class="t" style="left:120.50px;top:1062.00px;font-size:13px;color:#333338;font-weight:700;transform:scaleX(1.0485);transform-origin:0 0;-webkit-text-stroke:0.3px;">Publication Date</span>
<span class="t" style="left:370.00px;top:1062.00px;font-size:13px;color:#333338;font-weight:700;transform:scaleX(1.0199);transform-origin:0 0;-webkit-text-stroke:0.3px;">Published By</span>
<span class="t" style="left:635.00px;top:1062.00px;font-size:13px;color:#333338;font-weight:700;transform:scaleX(1.0629);transform-origin:0 0;-webkit-text-stroke:0.3px;">Duration of Advertisement</span>
<span class="t" style="left:1033.00px;top:1062.00px;font-size:13px;color:#333338;font-weight:700;transform:scaleX(1.0519);transform-origin:0 0;-webkit-text-stroke:0.3px;">Deadline</span>
<span class="t" style="left:1223.00px;top:1062.00px;font-size:13px;color:#333338;font-weight:700;transform:scaleX(1.0689);transform-origin:0 0;-webkit-text-stroke:0.3px;">View Remarks</span>
<span class="t" style="left:14.30px;top:1081.00px;font-size:13px;color:#3a3a3a;letter-spacing:-0.257px;">Original</span>
<span class="t" style="left:120.50px;top:1081.00px;font-size:13px;color:#3a3a3a;letter-spacing:-0.255px;">19-Feb-2021</span>
<span class="t" style="left:370.00px;top:1081.00px;font-size:13px;color:#3a3a3a;letter-spacing:-0.279px;">Luchi Holganza</span>
<span class="t" style="left:635.00px;top:1081.00px;font-size:13px;color:#3a3a3a;letter-spacing:-0.419px;">15 DAYS</span>
<span class="t" style="left:1033.00px;top:1081.00px;font-size:13px;color:#3a3a3a;letter-spacing:-0.144px;">05-Mar-2021</span>
<span class="t" style="left:1137.70px;top:1167.00px;font-size:9.4px;color:#fff;letter-spacing:0.270px;">Copyright (c) 2006, Oracle. All rights reserved</span>
</body></html>
